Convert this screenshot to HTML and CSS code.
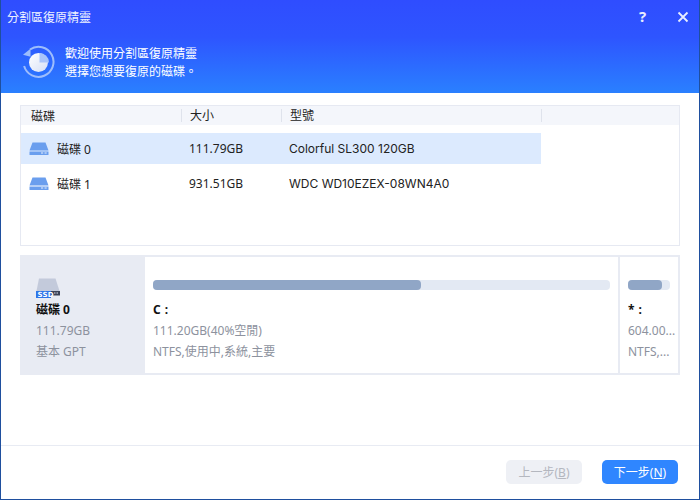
FILE: index.html
```html
<!DOCTYPE html>
<html lang="zh-Hant">
<head>
<meta charset="utf-8">
<title>分割區復原精靈</title>
<link rel="stylesheet" href="styles.css">
</head>
<body>
<div class="window">
  <header class="banner">
    <div class="titlebar">
      <span class="title">分割區復原精靈</span>
      <span class="help">?</span>
      <svg class="close" width="12" height="12" viewBox="0 0 12 12"><path d="M1.500 1.500l9 9M10.500 1.500l-9 9" stroke="#e8eeff" stroke-width="1.800" fill="none"/></svg>
    </div>
    <div class="welcome">
      <svg class="logo" width="34" height="34" viewBox="0 0 34 34">
        <defs>
          <linearGradient id="disc" x1="0" y1="0" x2="1" y2="1">
            <stop offset="0" stop-color="#ffffff"/>
            <stop offset="1" stop-color="#d5dff5"/>
          </linearGradient>
        </defs>
        <path d="M8 4.500A15 15 0 1 1 2.100 21" fill="none" stroke="#9dbdfc" stroke-width="2"/>
        <path d="M1 9.800l7.500-6v8z" fill="#9dbdfc"/>
        <circle cx="16.500" cy="17.500" r="9.500" fill="url(#disc)"/>
        <path d="M17.500 8a9.500 9.500 0 0 1 9.500 9.500h-9.500z" fill="#a9c4fa"/>
      </svg>
      <div class="welcome-text">
        <div>歡迎使用分割區復原精靈</div>
        <div>選擇您想要復原的磁碟。</div>
      </div>
    </div>
  </header>
  <main class="content">
    <section class="table">
      <div class="thead">
        <div class="c1">磁碟</div>
        <div class="c2 sep">大小</div>
        <div class="c3 sep">型號</div>
        <div class="c4 sep"></div>
      </div>
      <div class="row selected">
        <div class="c1 disk">
          <svg class="hdd" width="20" height="14" viewBox="0 0 20 14"><path d="M3.500 0.500h13L19.500 8.500H0.500z" fill="#6a9eee"/><path d="M0.500 9.500h19v3.500h-19z" fill="#6a9eee"/><path d="M12 11h2.200M15.500 11h2.200" stroke="#e6effd" stroke-width="1"/></svg>
          <span>磁碟 0</span>
        </div>
        <div class="c2">111.79GB</div>
        <div class="c3 model">Colorful SL300 120GB</div>
      </div>
      <div class="row">
        <div class="c1 disk">
          <svg class="hdd" width="20" height="14" viewBox="0 0 20 14"><path d="M3.500 0.500h13L19.500 8.500H0.500z" fill="#6a9eee"/><path d="M0.500 9.500h19v3.500h-19z" fill="#6a9eee"/><path d="M12 11h2.200M15.500 11h2.200" stroke="#e6effd" stroke-width="1"/></svg>
          <span>磁碟 1</span>
        </div>
        <div class="c2">931.51GB</div>
        <div class="c3 model">WDC WD10EZEX-08WN4A0</div>
      </div>
    </section>
    <section class="panel">
      <div class="panel-disk">
        <svg class="ssd" width="24" height="20" viewBox="0 0 24 20">
          <path d="M3 0.500h16.500L23.500 13H0.500z" fill="#c3cadb"/>
          <rect x="15" y="13" width="9" height="4.500" fill="#3b4257"/>
          <rect x="0" y="13" width="15" height="7" fill="#2e74e8"/>
          <text class="ssd-label" x="1.500" y="19">SSD</text>
          <path d="M18 15h1.500M20.500 15h1.500" stroke="#dfe3ee" stroke-width="1"/>
        </svg>
        <div class="disk-name">磁碟 0</div>
        <div class="muted">111.79GB</div>
        <div class="muted">基本 GPT</div>
      </div>
      <div class="part part-c">
        <div class="bar"><div class="fill" style="width:58.600%"></div></div>
        <div class="part-name">C :</div>
        <div class="muted">111.20GB(40%空閒)</div>
        <div class="muted">NTFS,使用中,系統,主要</div>
      </div>
      <div class="part part-s">
        <div class="bar"><div class="fill" style="width:82%"></div></div>
        <div class="part-name">* :</div>
        <div class="muted">604.00...</div>
        <div class="muted">NTFS,...</div>
      </div>
    </section>
  </main>
  <footer class="footer">
    <button class="btn disabled">上一步(<u>B</u>)</button>
    <button class="btn primary">下一步(<u>N</u>)</button>
  </footer>
</div>
</body>
</html>
```

FILE: styles.css
```css
* { box-sizing: border-box; }
html, body { margin: 0; padding: 0; }
body {
  width: 700px;
  height: 500px;
  overflow: hidden;
  background: #fff;
  font-family: "Noto Sans", "Noto Sans CJK TC", sans-serif;
  font-size: 12px;
  color: #222;
}
.window {
  width: 700px;
  height: 500px;
  border: 1px solid #1f4f9e;
  border-top: 0;
  display: flex;
  flex-direction: column;
}
.banner {
  height: 93px;
  background: linear-gradient(180deg, #2f4dff 0%, #2e55ff 40%, #2a80ff 100%);
  color: #fff;
  flex: none;
}
.titlebar {
  height: 33px;
  display: flex;
  align-items: center;
  padding: 0 10px 0 6px;
}
.title { flex: 1; font-size: 12px; color: #eef3ff; }
.help { font-size: 15px; font-weight: 700; width: 12px; margin-right: 26px; color: #e8eeff; line-height: 1; }
.welcome {
  display: flex;
  align-items: center;
  padding: 10px 0 0 21px;
  gap: 9px;
}
.welcome-text { font-size: 12px; line-height: 18px; margin-top: 2px; }
.content { flex: 1; padding: 12px 19px 0; }
.table {
  height: 141px;
  border: 1px solid #e6e9f2;
}
.thead {
  display: flex;
  height: 19px;
  background: #f4f6fb;
  align-items: center;
  margin-bottom: 8px;
}
.row {
  display: flex;
  align-items: center;
  height: 31px;
  width: 520px;
  margin-bottom: 4px;
}
.row.selected { background: #dceafe; }
.c1 { width: 160px; padding-left: 10px; }
.c2 { width: 100px; padding-left: 8px; }
.c3 { width: 260px; padding-left: 8px; }
.c4 { flex: 1; }
.model { font-family: "Inter", "Noto Sans", sans-serif; }
.sep { border-left: 1px solid #dfe3ec; height: 13px; line-height: 13px; }
.disk { display: flex; align-items: center; gap: 8px; padding-left: 8px; }
.panel {
  display: flex;
  height: 120px;
  margin-top: 9px;
  border: 2px solid #e8ebf3;
  border-left: 0;
  background: #fff;
}
.panel-disk {
  width: 125px;
  background: #e8ebf3;
  padding: 21px 0 0 16px;
  flex: none;
}
.ssd { display: block; }
.ssd-label { font-family: "DejaVu Sans", sans-serif; font-size: 7px; font-weight: 700; fill: #fff; letter-spacing: 0.200px; }
.disk-name { font-weight: 700; color: #111; line-height: 20px; margin-top: 2px; }
.muted { color: #8d929e; line-height: 21px; white-space: nowrap; }
.part { padding: 23px 0 0 8px; overflow: hidden; }
.part-c { width: 475px; border-right: 2px solid #e8ebf3; padding-right: 8px; }
.part-s { flex: 1; padding-right: 8px; }
.bar { height: 10px; border-radius: 4px; background: #e3e9f3; }
.fill { height: 10px; border-radius: 4px; background: #90a6c6; }
.part-name { font-weight: 700; color: #111; line-height: 20px; margin-top: 10px; word-spacing: 1px; }
.footer {
  flex: none;
  height: 54px;
  border-top: 1px solid #e8ebf3;
  display: flex;
  justify-content: flex-end;
  align-items: center;
  padding: 0 21px 1px 0;
  gap: 20px;
}
.btn {
  width: 76px;
  height: 24px;
  border: 0;
  border-radius: 5px;
  font: inherit;
  padding: 0;
}
.disabled { background: #eef0f5; color: #b4b7bf; }
.primary { background: #2f86ff; color: #fff; }
```
